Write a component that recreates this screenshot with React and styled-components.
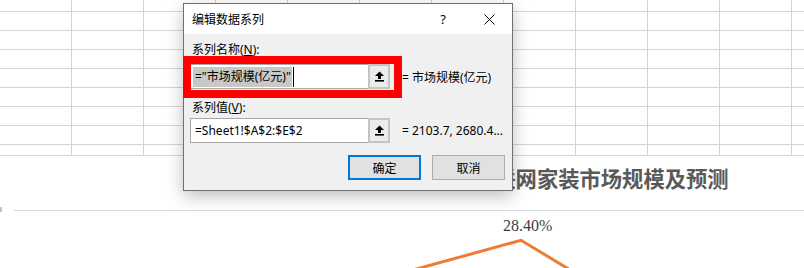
import React from 'react';
import styled, { createGlobalStyle } from 'styled-components';

const Global = createGlobalStyle`
  html, body { margin: 0; padding: 0; background: #fff; }
  body { font-family: "Noto Sans", "Noto Sans CJK SC", sans-serif; }
`;

const UI_FONT = `"Segoe UI", "Noto Sans", "Noto Sans CJK SC", sans-serif`;

const Page = styled.div`
  position: relative;
  width: 804px;
  height: 268px;
  overflow: hidden;
  background: #fff;
`;

const Sheet = styled.div`
  display: grid;
  grid-template-columns: repeat(12, 72px);
  grid-template-rows: 12px repeat(7, 19px) 11px;
  width: 864px;
`;

const Cell = styled.div`
  box-sizing: border-box;
  border-right: 1px solid #d4d4d4;
  border-bottom: 1px solid #d4d4d4;
`;

const Chart = styled.div`
  position: relative;
  height: 112px;
  box-sizing: border-box;
  padding-top: 10px;
  display: flow-root;
`;

const ChartTitle = styled.div`
  padding-left: 473px;
  height: 24px;
  line-height: 24px;
  font-family: "Noto Sans CJK SC", sans-serif;
  font-size: 21.3px;
  font-weight: bold;
  color: #595959;
  white-space: nowrap;
`;

const GridLine = styled.div`
  margin-top: 20px;
  margin-left: 14px;
  height: 1px;
  background: #d9d9d9;
`;

const EdgeMark = styled.div`
  position: absolute;
  left: 0;
  top: 51px;
  width: 2px;
  height: 5px;
  background: #bfbfbf;
`;

const DataLabel = styled.span`
  position: absolute;
  left: 503px;
  top: 62px;
  font-family: "Liberation Serif", serif;
  font-size: 16px;
  line-height: 16px;
  color: #404040;
`;

const PlotSvg = styled.svg`
  position: absolute;
  left: 0;
  top: 0;
`;

const Dialog = styled.div`
  position: absolute;
  left: 183px;
  top: 3px;
  width: 330px;
  height: 188px;
  box-sizing: border-box;
  border: 1px solid #707070;
  background: #f0f0f0;
  box-shadow: 0 5px 16px rgba(0, 0, 0, 0.26);
  display: flex;
  flex-direction: column;
  font-family: ${UI_FONT};
  font-size: 12px;
  color: #000;
`;

const TitleBar = styled.div`
  height: 30px;
  background: #fff;
  display: flex;
  align-items: center;
  padding-left: 8px;
`;

const TitleText = styled.span`
  flex: 1;
  font-size: 12px;
`;

const CaptionButton = styled.div`
  width: 46px;
  height: 30px;
  display: flex;
  align-items: center;
  justify-content: center;
  font-size: 13px;
`;

const Body = styled.div`
  flex: 1;
  padding-left: 6px;
  display: flex;
  flex-direction: column;
`;

const Label = styled.div`
  margin-top: ${p => p.$top}px;
  padding-left: 2px;
  height: 16px;
  line-height: 16px;
  u { text-decoration: underline; text-underline-offset: 1px; }
`;

const InputRow = styled.div`
  margin-top: ${p => p.$top}px;
  display: flex;
  align-items: center;
`;

const Field = styled.div`
  width: 200px;
  height: 25px;
  display: flex;
`;

const TextBox = styled.div`
  flex: 1;
  box-sizing: border-box;
  border: 1px solid #a8a8a8;
  border-right: none;
  background: #fff;
  display: flex;
  align-items: center;
  padding-left: ${p => (p.$selected ? 2 : 4)}px;
  white-space: nowrap;
  overflow: hidden;
`;

const Selection = styled.span`
  background: #c8c8c8;
  height: 20px;
  line-height: 20px;
  padding-left: 2px;
  padding-right: 1px;
`;

const Caret = styled.span`
  width: 1px;
  height: 20px;
  background: #000;
  margin-left: 1px;
`;

const RefButton = styled.div`
  width: 22px;
  box-sizing: border-box;
  border: 2px solid #c4c4c4;
  background: #ececec;
  display: flex;
  align-items: center;
  justify-content: center;
`;

const Value = styled.span`
  margin-left: 12px;
  white-space: nowrap;
`;

const ButtonRow = styled.div`
  margin-top: 12px;
  padding-right: 7px;
  display: flex;
  justify-content: flex-end;
  gap: 11px;
`;

const Button = styled.div`
  width: 73px;
  height: 25px;
  box-sizing: border-box;
  background: #e1e1e1;
  border: ${p => (p.$primary ? '2px solid #0078d7' : '1px solid #adadad')};
  display: flex;
  align-items: center;
  justify-content: center;
  font-size: 12px;
`;

const Annotation = styled.div`
  position: absolute;
  left: 183px;
  top: 56px;
  width: 219px;
  height: 42px;
  box-sizing: border-box;
  border: 8px solid #ff0000;
`;

const CollapseIcon = () => (
  <svg width="9" height="11" viewBox="0 0 9 11">
    <polygon points="0,5 4.5,0.5 9,5" fill="#000" />
    <rect x="3" y="4.5" width="3" height="3.5" fill="#000" />
    <rect x="0" y="9" width="9" height="1.6" fill="#000" />
  </svg>
);

const CloseIcon = () => (
  <svg width="11" height="11" viewBox="0 0 11 11">
    <path d="M0.5 0.5 L10.5 10.5 M10.5 0.5 L0.5 10.5" stroke="#000" strokeWidth="1" fill="none" />
  </svg>
);

export default function App() {
  const cells = [];
  for (let r = 0; r < 9; r++) {
    for (let c = 0; c < 12; c++) cells.push(<Cell key={`${r}-${c}`} />);
  }
  return (
    <>
      <Global />
      <Page>
        <Sheet>{cells}</Sheet>
        <Chart>
          <ChartTitle>互联网家装市场规模及预测</ChartTitle>
          <GridLine />
          <EdgeMark />
          <DataLabel>28.40%</DataLabel>
          <PlotSvg width="804" height="112" viewBox="0 0 804 112">
            <polyline
              points="400,117.5 521,84.3 572,115"
              fill="none"
              stroke="#ed7d31"
              strokeWidth="3"
              strokeLinejoin="miter"
            />
          </PlotSvg>
        </Chart>

        <Dialog>
          <TitleBar>
            <TitleText>编辑数据系列</TitleText>
            <CaptionButton>?</CaptionButton>
            <CaptionButton><CloseIcon /></CaptionButton>
          </TitleBar>
          <Body>
            <Label $top={8}>系列名称(<u>N</u>):</Label>
            <InputRow $top={6}>
              <Field>
                <TextBox $selected>
                  <Selection>="市场规模(亿元)"</Selection>
                  <Caret />
                </TextBox>
                <RefButton><CollapseIcon /></RefButton>
              </Field>
              <Value>= 市场规模(亿元)</Value>
            </InputRow>
            <Label $top={11}>系列值(<u>V</u>):</Label>
            <InputRow $top={2}>
              <Field>
                <TextBox>=Sheet1!$A$2:$E$2</TextBox>
                <RefButton><CollapseIcon /></RefButton>
              </Field>
              <Value>= 2103.7, 2680.4...</Value>
            </InputRow>
            <ButtonRow>
              <Button $primary>确定</Button>
              <Button>取消</Button>
            </ButtonRow>
          </Body>
        </Dialog>
        <Annotation />
      </Page>
    </>
  );
}
